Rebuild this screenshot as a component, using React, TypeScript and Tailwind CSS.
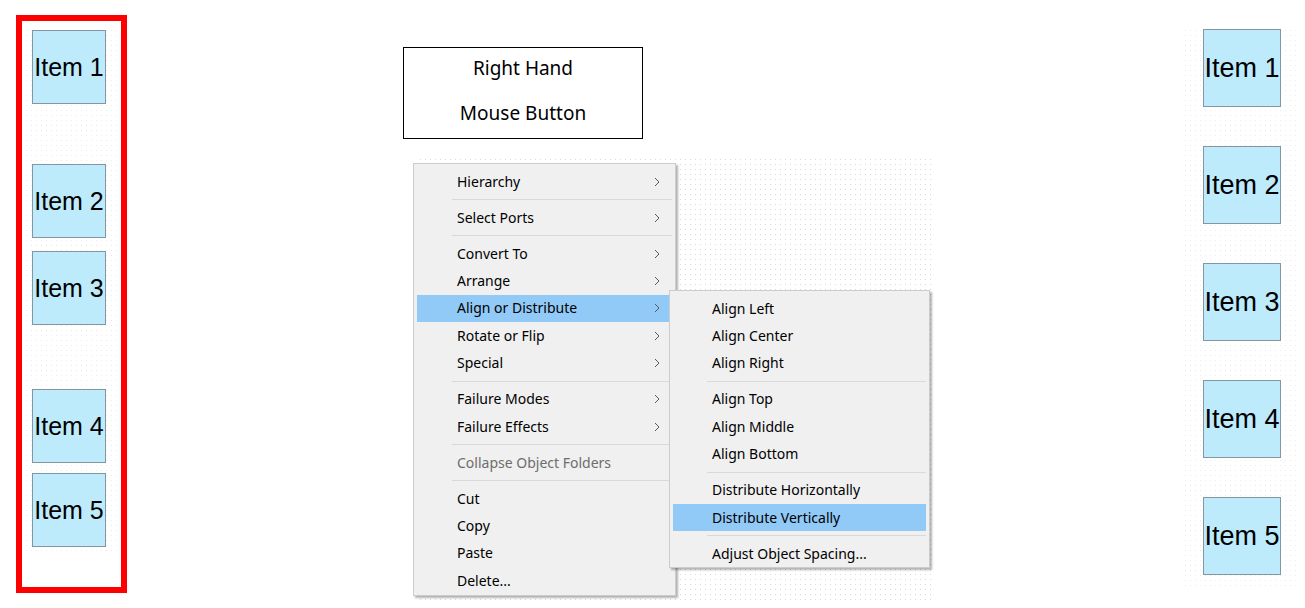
import React from "react";

const menuFont = { fontFamily: '"Noto Sans", "Open Sans", sans-serif' };
const arial = { fontFamily: '"Liberation Sans", Arial, sans-serif' };

function Chevron() {
  return (
    <svg width="6" height="10" viewBox="0 0 6 10" className="text-[#5a5a5a]">
      <path d="M1 1 L5 5 L1 9" fill="none" stroke="currentColor" strokeWidth="1" />
    </svg>
  );
}

type Entry =
  | { sep: true }
  | { label: string; sub?: boolean; active?: boolean; disabled?: boolean };

function MenuList({ entries, textPad, sepPad }: { entries: Entry[]; textPad: string; sepPad: string }) {
  return (
    <div className="flex flex-col">
      {entries.map((e, i) =>
        "sep" in e ? (
          <div key={i} className={`h-[8.6px] flex items-center ${sepPad}`}>
            <div className="h-px w-full bg-[#d9d9d9]" />
          </div>
        ) : (
          <div
            key={i}
            className={`h-[27.4px] flex items-center justify-between ${textPad} pr-[12px] text-[14px] ${
              e.active ? "bg-[#91c9f7]" : ""
            } ${e.disabled ? "text-[#6d6d6d]" : "text-black"}`}
          >
            <span className="leading-none">{e.label}</span>
            {e.sub ? <Chevron /> : null}
          </div>
        )
      )}
    </div>
  );
}

const mainEntries: Entry[] = [
  { label: "Hierarchy", sub: true },
  { sep: true },
  { label: "Select Ports", sub: true },
  { sep: true },
  { label: "Convert To", sub: true },
  { label: "Arrange", sub: true },
  { label: "Align or Distribute", sub: true, active: true },
  { label: "Rotate or Flip", sub: true },
  { label: "Special", sub: true },
  { sep: true },
  { label: "Failure Modes", sub: true },
  { label: "Failure Effects", sub: true },
  { sep: true },
  { label: "Collapse Object Folders", disabled: true },
  { sep: true },
  { label: "Cut" },
  { label: "Copy" },
  { label: "Paste" },
  { label: "Delete..." },
];

const subEntries: Entry[] = [
  { label: "Align Left" },
  { label: "Align Center" },
  { label: "Align Right" },
  { sep: true },
  { label: "Align Top" },
  { label: "Align Middle" },
  { label: "Align Bottom" },
  { sep: true },
  { label: "Distribute Horizontally" },
  { label: "Distribute Vertically", active: true },
  { sep: true },
  { label: "Adjust Object Spacing..." },
];

const dots =
  "bg-[radial-gradient(circle,#d9d9d9_0.8px,transparent_1px)] bg-[length:5px_5px]";
const dotsLight =
  "bg-[radial-gradient(circle,#ececec_0.8px,transparent_1px)] bg-[length:5px_5px]";

function Item({ label, cls }: { label: string; cls: string }) {
  return (
    <div
      className={`flex shrink-0 items-center justify-center bg-[#bdebfc] border border-[#8496a2] text-black ${cls}`}
      style={arial}
    >
      <span className="whitespace-nowrap leading-none">{label}</span>
    </div>
  );
}

export default function App() {
  return (
    <div className="w-[1305px] h-[608px] bg-white overflow-hidden flex items-start">
      {/* left: items before distribution, inside red frame */}
      <div className="ml-[16px] mt-[15px] w-[111px] h-[578px] border-[6px] border-[#ff0000] shrink-0">
        <div className={`ml-[2px] mt-[7px] w-[94px] h-[527px] ${dotsLight} flex flex-col pl-[8px]`}>
          <Item label="Item 1" cls="w-[74px] h-[74px] mt-[2px] text-[25px]" />
          <Item label="Item 2" cls="w-[74px] h-[74px] mt-[60px] text-[25px]" />
          <Item label="Item 3" cls="w-[74px] h-[74px] mt-[13px] text-[25px]" />
          <Item label="Item 4" cls="w-[74px] h-[74px] mt-[64px] text-[25px]" />
          <Item label="Item 5" cls="w-[74px] h-[74px] mt-[10px] text-[25px]" />
        </div>
      </div>

      {/* middle: label and context menus */}
      <div className="relative ml-[276px] w-[540px] h-[608px] shrink-0">
        <div
          className="mt-[47px] w-[240px] h-[92px] border border-black flex flex-col items-center justify-center gap-[26px] pb-[4px] text-[19px] text-black"
          style={menuFont}
        >
          <span className="leading-none">Right Hand</span>
          <span className="leading-none">Mouse Button</span>
        </div>

        {/* dotted canvas behind menu */}
        <div className={`absolute left-[15px] top-[157px] w-[515px] h-[443px] ${dots}`} />

        {/* main context menu */}
        <div
          className="absolute left-[10px] top-[163px] w-[263px] h-[433px] bg-[#f0f0f0] border border-[#cccccc] shadow-[2px_2px_2px_rgba(0,0,0,0.3)] pt-[4px] px-[3px]"
          style={menuFont}
        >
          <MenuList entries={mainEntries} textPad="pl-[40px]" sepPad="pl-[35px]" />
        </div>

        {/* submenu */}
        <div
          className="absolute left-[266px] top-[290px] w-[261px] h-[278px] bg-[#f0f0f0] border border-[#cccccc] shadow-[2px_2px_2px_rgba(0,0,0,0.3)] pt-[4px] px-[3px]"
          style={menuFont}
        >
          <MenuList entries={subEntries} textPad="pl-[39px]" sepPad="pl-[34px]" />
        </div>
      </div>

      {/* right: items after distribution */}
      <div className={`ml-auto mr-[8px] mt-[28px] w-[114px] h-[560px] pl-[20px] pt-[1px] ${dotsLight} flex flex-col gap-[39px]`}>
        <Item label="Item 1" cls="w-[78px] h-[78px] text-[27px]" />
        <Item label="Item 2" cls="w-[78px] h-[78px] text-[27px]" />
        <Item label="Item 3" cls="w-[78px] h-[78px] text-[27px]" />
        <Item label="Item 4" cls="w-[78px] h-[78px] text-[27px]" />
        <Item label="Item 5" cls="w-[78px] h-[78px] text-[27px]" />
      </div>
    </div>
  );
}
